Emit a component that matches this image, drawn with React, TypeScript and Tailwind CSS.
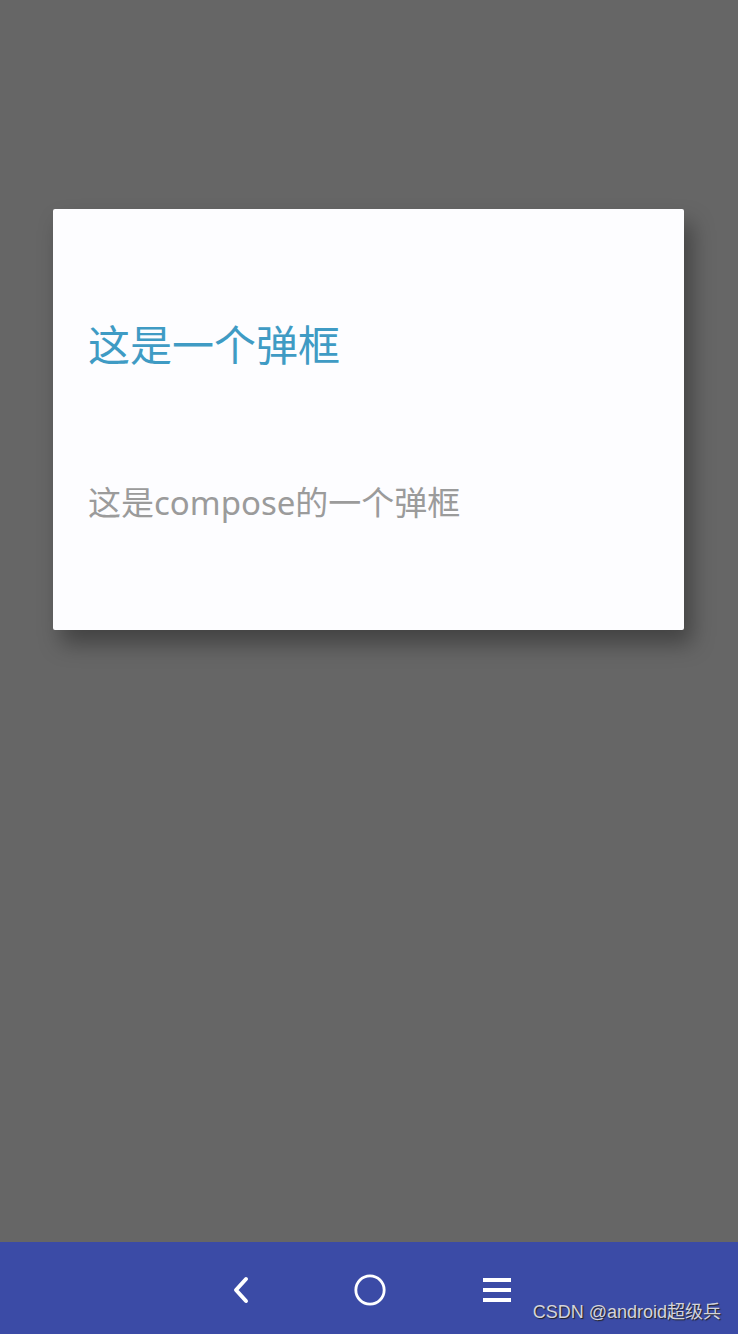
import { Circle } from "lucide-react";

const font = { fontFamily: '"Noto Sans", "Noto Sans CJK SC", sans-serif' };

const NavBar = () => (
  <div className="relative flex h-[92px] items-center justify-center gap-[94px] bg-[#3b4ba6] pt-1">
    <svg width="34" height="34" viewBox="0 0 34 34">
      <path d="M21 6 L11 17 L21 28" fill="none" stroke="#fff" strokeWidth="4" strokeLinecap="round" strokeLinejoin="round" />
    </svg>
    <Circle className="h-[34px] w-[34px] text-white" strokeWidth={2} />
    <svg width="32" height="32" viewBox="0 0 32 32">
      <rect x="2" y="4" width="28" height="4" fill="#fff" />
      <rect x="2" y="14" width="28" height="4" fill="#fff" />
      <rect x="2" y="24" width="28" height="4" fill="#fff" />
    </svg>
    <span
      className="absolute right-[17px] bottom-[8px] text-[18px] text-[#d4d4dc] [text-shadow:1px_1px_1px_#222]"
      style={{ fontFamily: '"Liberation Sans", "Noto Sans CJK SC", sans-serif' }}
    >
      CSDN @android超级兵
    </span>
  </div>
);

export default function App() {
  return (
    <div className="flex h-[1334px] w-[738px] flex-col bg-[#666666]" style={font}>
      <div className="flex-1 pt-[209px] pl-[53px]">
        <div className="w-[631px] rounded-[2px] bg-[#fdfdff] pt-[115px] pb-[111px] pl-[35px] shadow-[8px_14px_22px_rgba(0,0,0,0.35)]">
          <div className="text-[42px] leading-none text-[#3f9bc4]">这是一个弹框</div>
          <div className="mt-[120px] text-[33px] leading-none text-[#9b9b9b]">这是compose的一个弹框</div>
        </div>
      </div>
      <NavBar />
    </div>
  );
}
